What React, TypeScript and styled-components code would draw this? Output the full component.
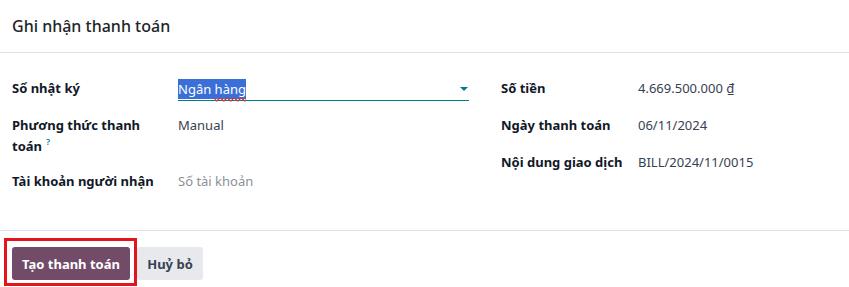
import { FC } from 'react';
import styled, { createGlobalStyle } from 'styled-components';

const GlobalStyle = createGlobalStyle`
  html, body {
    margin: 0;
    padding: 0;
    background: #ffffff;
  }
  body {
    font-family: 'Noto Sans', 'Liberation Sans', sans-serif;
    font-size: 13px;
    color: #374151;
  }
`;

type FieldProps = {
  label: string;
  tooltip?: boolean;
  children: React.ReactNode;
};

const Field: FC<FieldProps> = ({ label, tooltip, children }) => (
  <Row>
    <Label>
      {label}
      {tooltip && <Help>?</Help>}
    </Label>
    <Value>{children}</Value>
  </Row>
);

const App: FC = () => {
  return (
    <>
      <GlobalStyle />
      <Dialog>
        <Header>
          <Title>Ghi nhận thanh toán</Title>
        </Header>
        <Body>
          <Group $labelWidth={166} $gap={14}>
            <Field label="Sổ nhật ký">
              <Select>
                <Selected>
                  Ngân <Misspelled>hàng</Misspelled>
                </Selected>
                <Caret />
              </Select>
            </Field>
            <Field label="Phương thức thanh toán" tooltip>
              Manual
            </Field>
            <Field label="Tài khoản người nhận">
              <Placeholder>Số tài khoản</Placeholder>
            </Field>
          </Group>
          <Group $labelWidth={137} $gap={15} $nowrap>
            <Field label="Số tiền">4.669.500.000 ₫</Field>
            <Field label="Ngày thanh toán">06/11/2024</Field>
            <Field label="Nội dung giao dịch">BILL/2024/11/0015</Field>
          </Group>
        </Body>
        <Footer>
          <Highlight>
            <PrimaryButton>Tạo thanh toán</PrimaryButton>
          </Highlight>
          <SecondaryButton>Huỷ bỏ</SecondaryButton>
        </Footer>
      </Dialog>
    </>
  );
};

export default App;

const Dialog = styled.div`
  width: 849px;
  height: 287px;
  background: #ffffff;
  overflow: hidden;
`;

const Header = styled.div`
  height: 52px;
  padding: 0 12px;
  display: flex;
  align-items: center;
  border-bottom: 1px solid #dee2e6;
`;

const Title = styled.h4`
  margin: 0;
  font-size: 16px;
  font-weight: 500;
  color: #212529;
`;

const Body = styled.div`
  height: 178px;
  padding: 25px 12px 0;
  box-sizing: border-box;
  display: grid;
  grid-template-columns: 457px 1fr;
  column-gap: 32px;
  border-bottom: 1px solid #dee2e6;
`;

const Group = styled.div<{ $labelWidth: number; $gap: number; $nowrap?: boolean }>`
  display: flex;
  flex-direction: column;
  gap: ${(p) => p.$gap}px;

  & > div {
    grid-template-columns: ${(p) => p.$labelWidth}px 1fr;
  }
  & > div > div:first-child {
    white-space: ${(p) => (p.$nowrap ? 'nowrap' : 'normal')};
  }
`;

const Row = styled.div`
  display: grid;
  min-height: 22px;
  line-height: 21px;
`;

const Label = styled.div`
  font-weight: 700;
  color: #111827;
  padding-right: 16px;
`;

const Help = styled.span`
  position: relative;
  top: -6px;
  font-size: 9px;
  line-height: 1;
  font-weight: 600;
  color: #017e84;
  margin-left: 4px;
`;

const Value = styled.div`
  color: #374151;
  white-space: nowrap;
`;

const Select = styled.div`
  display: flex;
  align-items: center;
  justify-content: space-between;
  height: 22px;
  border-bottom: 1px solid #017e84;
`;

const Selected = styled.span`
  background: #3a6fd8;
  color: #ffffff;
  line-height: 20px;
`;

const Misspelled = styled.span`
  text-decoration: underline wavy #d0342c;
  text-underline-offset: 3px;
`;

const Caret = styled.span`
  width: 0;
  height: 0;
  margin-right: 1px;
  border-left: 4px solid transparent;
  border-right: 4px solid transparent;
  border-top: 4px solid #017e84;
`;

const Placeholder = styled.span`
  color: #8d9096;
`;

const Footer = styled.div`
  padding: 16px 12px 0;
  display: flex;
  gap: 7px;
`;

const Highlight = styled.div`
  position: relative;
  &::after {
    content: '';
    position: absolute;
    top: -9px;
    left: -8px;
    right: -7px;
    bottom: -6px;
    border: 3px solid #e3141b;
    pointer-events: none;
  }
`;

const Button = styled.button`
  height: 33px;
  padding: 0;
  border: none;
  border-radius: 3px;
  font-family: inherit;
  font-size: 13px;
  font-weight: 700;
  white-space: nowrap;
  cursor: pointer;
`;

const PrimaryButton = styled(Button)`
  width: 118px;
  background: #714b67;
  color: #ffffff;
`;

const SecondaryButton = styled(Button)`
  width: 66px;
  background: #e7e9ed;
  color: #374151;
`;
